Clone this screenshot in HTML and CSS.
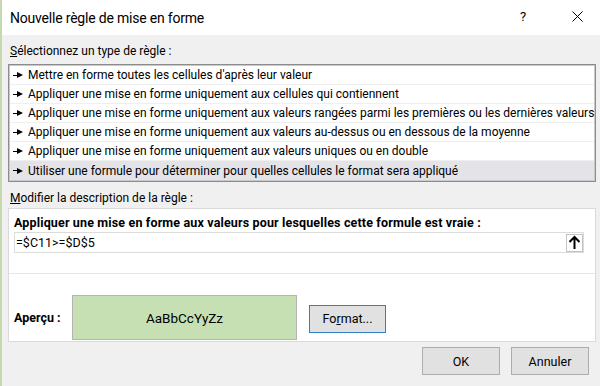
FILE: index.html
```html
<!DOCTYPE html>
<html lang="fr">
<head>
    <meta charset="UTF-8">
    <meta name="viewport" content="width=device-width, initial-scale=1.0">
    <title>Nouvelle règle de mise en forme</title>
    <link rel="stylesheet" href="styles.css">
</head>
<body>
    <div class="dialog">
        <div class="titlebar">
            <span class="title">Nouvelle règle de mise en forme</span>
            <span class="help">?</span>
            <span class="close">
                <svg width="11" height="11" viewBox="0 0 11 11"><path d="M0.5 0.5 L10.5 10.5 M10.5 0.5 L0.5 10.5" stroke="#000" stroke-width="1"/></svg>
            </span>
        </div>

        <div class="content">
            <div class="label"><u>S</u>électionnez un type de règle :</div>

            <ul class="rules">
                <li><span class="pointer"></span>Mettre en forme toutes les cellules d'après leur valeur</li>
                <li><span class="pointer"></span>Appliquer une mise en forme uniquement aux cellules qui contiennent</li>
                <li><span class="pointer"></span>Appliquer une mise en forme uniquement aux valeurs rangées parmi les premières ou les dernières valeurs</li>
                <li><span class="pointer"></span>Appliquer une mise en forme uniquement aux valeurs au-dessus ou en dessous de la moyenne</li>
                <li><span class="pointer"></span>Appliquer une mise en forme uniquement aux valeurs uniques ou en double</li>
                <li class="selected"><span class="pointer"></span>Utiliser une formule pour déterminer pour quelles cellules le format sera appliqué</li>
            </ul>

            <div class="label label-edit"><u>M</u>odifier la description de la règle :</div>

            <div class="panel">
                <div class="panel-top">
                    <div class="panel-title">Appliquer une mise en forme aux valeurs pour lesquelles cette formule est vraie :</div>
                    <div class="formula">
                        <span class="formula-text">=$C11&gt;=$D$5</span>
                        <span class="ref-btn">
                            <svg width="13" height="16" viewBox="0 0 13 16"><path d="M6.5 2 V14 M1.5 7 L6.5 2 L11.5 7" stroke="#000" stroke-width="2" fill="none"/></svg>
                        </span>
                    </div>
                </div>
                <div class="preview-row">
                    <span class="preview-label">Aperçu :</span>
                    <div class="preview">AaBbCcYyZz</div>
                    <button class="btn format-btn">Fo<u>r</u>mat...</button>
                </div>
            </div>

            <div class="actions">
                <button class="btn">OK</button>
                <button class="btn">Annuler</button>
            </div>
        </div>
    </div>
</body>
</html>
```

FILE: styles.css
```css
body {
    margin: 0;
    padding: 0;
    width: 600px;
    height: 386px;
    overflow: hidden;
    font-family: Roboto, "Noto Sans", sans-serif;
    font-size: 12px;
    color: #000;
    background: #f0f0f0;
}
.dialog {
    height: 386px;
    border-left: 2px solid #c4d9ad;
    box-sizing: border-box;
}
.titlebar {
    height: 35px;
    background: #fff;
    display: flex;
    align-items: center;
    padding-left: 8px;
}
.title {
    font-size: 14px;
    letter-spacing: -0.2px;
    flex: 1;
}
.help {
    font-size: 13px;
    width: 52px;
    margin-bottom: 2px;
}
.close {
    width: 28px;
    display: flex;
    margin-bottom: 2px;
}
.content {
    padding-left: 6px;
}
.label {
    line-height: 16px;
    padding: 8px 0 0 2px;
    margin-bottom: 5px;
}
.label-edit {
    margin: 0 0 2px 0;
}
.rules {
    list-style: none;
    margin: 0;
    width: 588px;
    box-sizing: border-box;
    border: 1px solid #8c8c8c;
    box-shadow: inset 1px 1px 0 #c9c9c9, inset -1px -1px 0 #c9c9c9;
    background: #fff;
    padding: 1px;
}
.rules li {
    height: 18px;
    line-height: 18px;
    border-bottom: 1px solid #efefef;
    white-space: nowrap;
    display: flex;
    align-items: center;
}
.rules li:last-child {
    border-bottom: none;
    height: 19px;
}
.rules li.selected {
    background: #e3e3e8;
}
.pointer {
    width: 0;
    height: 0;
    border-top: 3px solid transparent;
    border-bottom: 3px solid transparent;
    border-left: 6px solid #000;
    margin: 0 5px 0 7px;
    position: relative;
}
.pointer::before {
    content: "";
    position: absolute;
    left: -10px;
    top: -0.5px;
    width: 4px;
    height: 1px;
    background: #000;
}
.panel {
    width: 588px;
    box-sizing: border-box;
    background: #fff;
    border: 1px solid #dadada;
}
.panel-top {
    padding: 6px 11px 20px 5px;
    border-bottom: 1px solid #e6e6e6;
}
.panel-title {
    font-size: 12.5px;
    font-weight: bold;
    letter-spacing: 0.15px;
    line-height: 16px;
    margin-bottom: 1px;
}
.formula {
    height: 21px;
    box-sizing: border-box;
    border: 1px solid #dcdcdc;
    display: flex;
    align-items: center;
    justify-content: space-between;
    padding-left: 1px;
}
.formula-text {
    font-size: 12.5px;
}
.ref-btn {
    width: 17px;
    height: 18px;
    box-sizing: border-box;
    border: 1px solid #c3c3c3;
    display: flex;
    align-items: center;
    justify-content: center;
}
.preview-row {
    display: flex;
    align-items: center;
    padding: 21px 0 1px 5px;
}
.preview-label {
    font-size: 12.5px;
    font-weight: bold;
    width: 58px;
}
.preview {
    width: 225px;
    height: 45px;
    box-sizing: border-box;
    background: #c6e0b4;
    border: 1px solid #b4b4b4;
    display: flex;
    align-items: center;
    justify-content: center;
    font-size: 13.5px;
}
.btn {
    font-family: Roboto, "Noto Sans", sans-serif;
    font-size: 12.5px;
    background: #e1e1e1;
    border: 1px solid #adadad;
    width: 78px;
    height: 28px;
    padding: 0;
    color: #000;
}
.format-btn {
    width: 77px;
    margin-left: 12px;
    border-color: #2f7fc6;
    margin-top: 2px;
}
.actions {
    display: flex;
    justify-content: flex-end;
    gap: 11px;
    padding: 5px 11px 0 0;
}
```
